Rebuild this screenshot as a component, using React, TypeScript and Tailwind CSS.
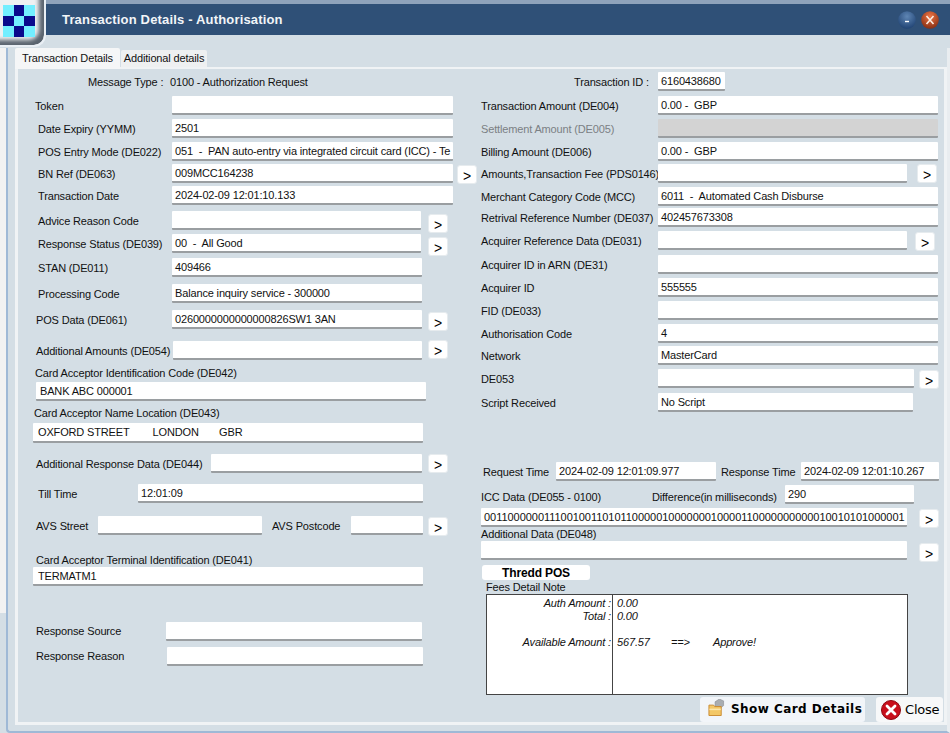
import type { ReactNode } from 'react';
import { clsx } from 'clsx';

function Label({ className, children }: { className?: string; children: ReactNode }) {
  return <span className={clsx('shrink-0 whitespace-pre text-[#111]', className)}>{children}</span>;
}

function Input({ className, value, disabled }: { className?: string; value?: string; disabled?: boolean }) {
  return (
    <div
      className={clsx(
        'flex h-[19px] shrink-0 items-center overflow-hidden whitespace-pre rounded-[1px] border-b-2 border-b-[#9a9ea1] pl-[3px] pt-px text-[#111]',
        disabled ? 'border-b-0 bg-[#d3d3d3]' : 'bg-white',
        className,
      )}
    >
      {value}
    </div>
  );
}

function Go({ className }: { className?: string }) {
  return (
    <button
      type="button"
      className={clsx(
        'flex h-[19px] w-[20px] shrink-0 items-center justify-center self-start rounded-[3px] border border-[#e6ebee] bg-white pt-[2px] text-[14px] leading-none text-black',
        className,
      )}
    >
      &gt;
    </button>
  );
}

function Row({ className, children }: { className?: string; children: ReactNode }) {
  return <div className={clsx('flex h-[19px] shrink-0 items-center [&>span]:pt-[2px]', className)}>{children}</div>;
}

function Logo() {
  const cells = [0, 1, 0, 1, 0, 1, 0, 1, 0];
  return (
    <div className="absolute left-0 top-0 z-10 h-[47px] w-[46px] rounded-br-[12px] border-b-2 border-r-2 border-[#e9eff5] bg-[#eef0f2] pl-[3px] pt-[5px] shadow-[inset_-5px_-5px_4px_#59636e]">
      <div className="grid h-[32px] w-[32px] grid-cols-3 grid-rows-3">
        {cells.map((c, i) => (
          <div key={i} className={c ? 'bg-[#0a0a8c]' : 'bg-[#73eeff]'} />
        ))}
      </div>
    </div>
  );
}

function Orb({ dark, light, children }: { dark: string; light: string; children: string }) {
  return (
    <svg width="18" height="18" viewBox="0 0 18 18">
      <defs>
        <radialGradient id={`orb${children}`} cx="50%" cy="30%" r="75%">
          <stop offset="0" stopColor={light} />
          <stop offset="1" stopColor={dark} />
        </radialGradient>
      </defs>
      <circle cx="9" cy="9" r="8.8" fill={`url(#orb${children})`} />
      {children === 'min' ? (
        <path d="M7 10.5h4" stroke="#fff" strokeWidth="1.4" />
      ) : (
        <path d="M5.5 5l7 8M12.5 5l-7 8" stroke="#fdeee4" strokeWidth="1.6" />
      )}
    </svg>
  );
}

function FolderIcon() {
  return (
    <svg width="17" height="17" viewBox="0 0 17 18" className="mb-[3px]">
      <path d="M7 3l4.5-3L16 2v5l-4 3-5-2z" fill="#a9adb1" stroke="#85898d" strokeWidth=".6" />
      <path d="M.5 6.5h5l1 1.5h7v9.5H.5z" fill="#f3c766" stroke="#c9892f" />
      <path d="M1 11h12" stroke="#fbe6ad" strokeWidth="1.6" />
    </svg>
  );
}

function CloseIcon() {
  return (
    <svg width="20" height="20" viewBox="0 0 20 20">
      <circle cx="10" cy="10" r="9.5" fill="#c80f1c" stroke="#8d0710" />
      <path d="M6 6l8 8M14 6l-8 8" stroke="#fff" strokeWidth="2.8" strokeLinecap="round" />
    </svg>
  );
}

function LeftColumn() {
  return (
    <div className="flex w-[462px] shrink-0 flex-col">
      <Row className="mt-[3px]">
        <Label className="ml-[70px] w-[82px]">Message Type :</Label>
        <Label>0100 - Authorization Request</Label>
      </Row>
      <Row className="mt-[5px]"><Label className="w-[154px] pl-[17px]">Token</Label><Input className="w-[281px]" /></Row>
      <Row className="mt-[4px]"><Label className="w-[154px] pl-[20px]">Date Expiry (YYMM)</Label><Input className="w-[281px]" value="2501" /></Row>
      <Row className="mt-[4px]"><Label className="w-[154px] pl-[20px]">POS Entry Mode (DE022)</Label><Input className="w-[281px]" value="051  -  PAN auto-entry via integrated circuit card (ICC) - Te" /></Row>
      <Row className="mt-[3px]"><Label className="w-[154px] pl-[20px]">BN Ref (DE063)</Label><Input className="w-[281px]" value="009MCC164238" /><Go className="ml-[4px] mt-px" /></Row>
      <Row className="mt-[3px]"><Label className="w-[154px] pl-[20px]">Transaction Date</Label><Input className="w-[281px]" value="2024-02-09 12:01:10.133" /></Row>
      <Row className="mt-[6px]"><Label className="w-[154px] pl-[20px]">Advice Reason Code</Label><Input className="w-[249px]" /><Go className="ml-[7px] mt-[3px]" /></Row>
      <Row className="mt-[4px]"><Label className="w-[154px] pl-[20px]">Response Status (DE039)</Label><Input className="w-[249px]" value="00  -  All Good" /><Go className="ml-[7px] mt-[3px]" /></Row>
      <Row className="mt-[5px]"><Label className="w-[154px] pl-[20px]">STAN (DE011)</Label><Input className="w-[250px]" value="409466" /></Row>
      <Row className="mt-[7px]"><Label className="w-[154px] pl-[20px]">Processing Code</Label><Input className="w-[250px]" value="Balance inquiry service - 300000" /></Row>
      <Row className="mt-[7px]"><Label className="w-[154px] pl-[18px]">POS Data (DE061)</Label><Input className="w-[250px]" value="0260000000000000826SW1 3AN" /><Go className="ml-[6px] mt-[2px]" /></Row>
      <Row className="mt-[12px]"><Label className="w-[155px] pl-[18px]">Additional Amounts (DE054)</Label><Input className="w-[249px]" /><Go className="ml-[6px] mt-[-1px]" /></Row>
      <Label className="ml-[17px] mt-[5px] h-[16px] leading-[16px]">Card Acceptor Identification Code (DE042)</Label>
      <Input className="ml-[18px] mt-px w-[390px] pl-[4px] pt-[2px]" value="BANK ABC 000001" />
      <Label className="ml-[16px] mt-[4px] h-[16px] leading-[16px]">Card Acceptor Name Location (DE043)</Label>
      <Input className="ml-[15px] mt-[2px] h-[20px] w-[390px] pl-[5px] pt-[3px]" value="OXFORD STREET        LONDON       GBR" />
      <Row className="mt-[11px]"><Label className="w-[193px] pl-[18px]">Additional Response Data (DE044)</Label><Input className="w-[211px]" /><Go className="ml-[6px]" /></Row>
      <Row className="mt-[11px]"><Label className="w-[120px] pl-[20px]">Till Time</Label><Input className="w-[285px]" value="12:01:09" /></Row>
      <Row className="mt-[13px]">
        <Label className="w-[80px] pl-[18px]">AVS Street</Label>
        <Input className="w-[164px]" />
        <Label className="ml-[10px] w-[79px]">AVS Postcode</Label>
        <Input className="w-[72px]" />
        <Go className="ml-[5px] mt-px" />
      </Row>
      <Label className="ml-[18px] mt-[18px] h-[14px] leading-[14px]">Card Acceptor Terminal Identification (DE041)</Label>
      <Input className="ml-[15px] w-[390px] pl-[5px] pt-[2px]" value="TERMATM1" />
      <Row className="mt-[36px]"><Label className="w-[148px] pl-[18px] !pt-0">Response Source</Label><Input className="w-[256px]" /></Row>
      <Row className="mt-[6px]"><Label className="w-[149px] pl-[18px] !pt-0">Response Reason</Label><Input className="w-[256px]" /></Row>
    </div>
  );
}

function RightColumn() {
  return (
    <div className="flex flex-1 flex-col">
      <Row className="mt-[3px]"><Label className="ml-[94px] w-[84px]">Transaction ID :</Label><Input className="w-[67px]" value="6160438680" /></Row>
      <Row className="mt-[5px]"><Label className="ml-px w-[177px]">Transaction Amount (DE004)</Label><Input className="w-[280px]" value="0.00 -  GBP" /></Row>
      <Row className="mt-[4px]"><Label className="ml-px w-[177px] !text-[#7b8084]">Settlement Amount (DE005)</Label><Input className="w-[280px]" disabled /></Row>
      <Row className="mt-[4px]"><Label className="ml-px w-[177px]">Billing Amount (DE006)</Label><Input className="w-[280px]" value="0.00 -  GBP" /></Row>
      <Row className="mt-[3px]"><Label className="ml-px w-[177px]">Amounts,Transaction Fee (PDS0146)</Label><Input className="w-[249px]" /><Go className="ml-[10px]" /></Row>
      <Row className="mt-[4px]"><Label className="ml-px w-[177px]">Merchant Category Code (MCC)</Label><Input className="w-[280px]" value="6011  -  Automated Cash Disburse" /></Row>
      <Row className="mt-[2px]"><Label className="ml-px w-[177px]">Retrival Reference Number (DE037)</Label><Input className="w-[280px]" value="402457673308" /></Row>
      <Row className="mt-[4px]"><Label className="ml-px w-[177px]">Acquirer Reference Data (DE031)</Label><Input className="w-[249px]" /><Go className="ml-[8px] mt-px" /></Row>
      <Row className="mt-[5px]"><Label className="ml-px w-[177px]">Acquirer ID in ARN (DE31)</Label><Input className="w-[280px]" /></Row>
      <Row className="mt-[4px]"><Label className="ml-px w-[177px]">Acquirer ID</Label><Input className="w-[280px]" value="555555" /></Row>
      <Row className="mt-[4px]"><Label className="ml-px w-[177px]">FID (DE033)</Label><Input className="w-[280px]" /></Row>
      <Row className="mt-[4px]"><Label className="ml-px w-[177px]">Authorisation Code</Label><Input className="w-[280px]" value="4" /></Row>
      <Row className="mt-[3px]"><Label className="ml-px w-[177px]">Network</Label><Input className="w-[280px]" value="MasterCard" /></Row>
      <Row className="mt-[4px]"><Label className="ml-px w-[177px]">DE053</Label><Input className="w-[256px]" /><Go className="ml-[5px] mt-px" /></Row>
      <Row className="mt-[5px]"><Label className="ml-px w-[177px]">Script Received</Label><Input className="w-[255px]" value="No Script" /></Row>
      <Row className="mt-[50px]">
        <Label className="ml-[3px] w-[73px]">Request Time</Label>
        <Input className="w-[160px]" value="2024-02-09 12:01:09.977" />
        <Label className="ml-[5px] w-[80px]">Response Time</Label>
        <Input className="w-[138px]" value="2024-02-09 12:01:10.267" />
      </Row>
      <Row className="mt-[4px]">
        <Label className="ml-px mt-[5px] w-[171px] self-start">ICC Data (DE055 - 0100)</Label>
        <Label className="mt-[5px] w-[133px] self-start">Difference(in milliseconds)</Label>
        <Input className="w-[129px]" value="290" />
      </Row>
      <Row className="mt-[4px]"><Input className="ml-px w-[426px] tracking-[-0.04px]" value="0011000000111001001101011000001000000010000110000000000010010101000001" /><Go className="ml-[12px] mt-px" /></Row>
      <Label className="ml-px h-[14px] leading-[14px]">Additional Data (DE048)</Label>
      <Row><Input className="ml-px w-[426px]" /><Go className="ml-[12px] mt-[2px]" /></Row>
      <button type="button" className="ml-[2px] mt-[5px] flex h-[15px] w-[108px] shrink-0 items-center justify-center rounded-[3px] bg-white text-[12px] font-bold text-black">Thredd POS</button>
      <Label className="ml-[6px] mt-px h-[13px] leading-[13px]">Fees Detail Note</Label>
      <div className="ml-[6px] flex h-[101px] w-[422px] shrink-0 border border-[#444] bg-white text-[11px] italic text-[#111]">
        <div className="flex w-[126px] flex-col items-end border-r border-[#444] pr-px pt-[2px] leading-[13px]">
          <span>Auth Amount :</span>
          <span>Total :</span>
          <span className="mt-[13px]">Available Amount :</span>
        </div>
        <div className="flex flex-col pl-[4px] pt-[2px] leading-[13px]">
          <span>0.00</span>
          <span>0.00</span>
          <span className="mt-[13px] flex">
            <span className="w-[54px]">567.57</span>
            <span className="w-[42px]">==&gt;</span>
            <span>Approve!</span>
          </span>
        </div>
      </div>
    </div>
  );
}

export default function App() {
  return (
    <div className="relative flex h-[733px] w-[950px] flex-col overflow-hidden bg-[#d4dee5] text-[11px] leading-none tracking-[-0.15px] [font-family:'Liberation_Sans',Arial,sans-serif]">
      <Logo />
      <div className="h-[4px] shrink-0 bg-[#8fa3bb]" />
      <header className="flex h-[31px] shrink-0 items-center bg-[#2f5077] pl-[62px] pr-[11px]">
        <h1 className="text-[13px] font-bold tracking-[.17px] text-[#f2f5f8]">Transaction Details - Authorisation</h1>
        <div className="ml-auto flex gap-[5px]">
          <Orb dark="#1c3f70" light="#5f86b4">min</Orb>
          <Orb dark="#7f2a10" light="#ee7444">close</Orb>
        </div>
      </header>
      <div className="flex flex-1">
        <div className="mt-[13px] h-[565px] w-[6px] shrink-0 bg-[#f2f2f2]" />
        <main className="mt-[13px] flex flex-1 flex-col rounded-bl-[4px] border-b-2 border-l-2 border-r-[3px] border-[#9fb9d6] border-r-[#e9edf0] pb-[6px] pl-[7px]">
          <div className="flex h-[19px] shrink-0 items-end">
            <div className="relative z-[1] -mb-[2px] flex h-[21px] w-[105px] items-center justify-center rounded-t-[2px] bg-[#f5f6f7] text-[#111]">Transaction Details</div>
            <div className="ml-px flex h-[17px] w-[86px] items-center justify-center rounded-t-[2px] bg-[#eef0f1] text-[#111]">Additional details</div>
          </div>
          <div className="flex flex-1 border-[3px] border-t-2 border-[#f0f3f5]">
            <LeftColumn />
            <RightColumn />
          </div>
        </main>
      </div>
      <div className="absolute bottom-[11px] right-[7px] flex gap-[11px]">
        <button type="button" className="flex h-[25px] w-[165px] items-center gap-[6px] whitespace-nowrap rounded-[3px] bg-[#f2f5f9] pb-[2px] pl-[8px] text-[12px] font-bold tracking-[.45px] text-black [font-family:'DejaVu_Sans',sans-serif]">
          <FolderIcon />
          Show Card Details
        </button>
        <button type="button" className="flex h-[25px] w-[67px] items-center gap-[4px] rounded-[3px] bg-[#f7f8f9] pl-[5px] text-[13px] tracking-[-0.2px] text-black [font-family:'DejaVu_Sans',sans-serif]">
          <CloseIcon />
          Close
        </button>
      </div>
    </div>
  );
}
